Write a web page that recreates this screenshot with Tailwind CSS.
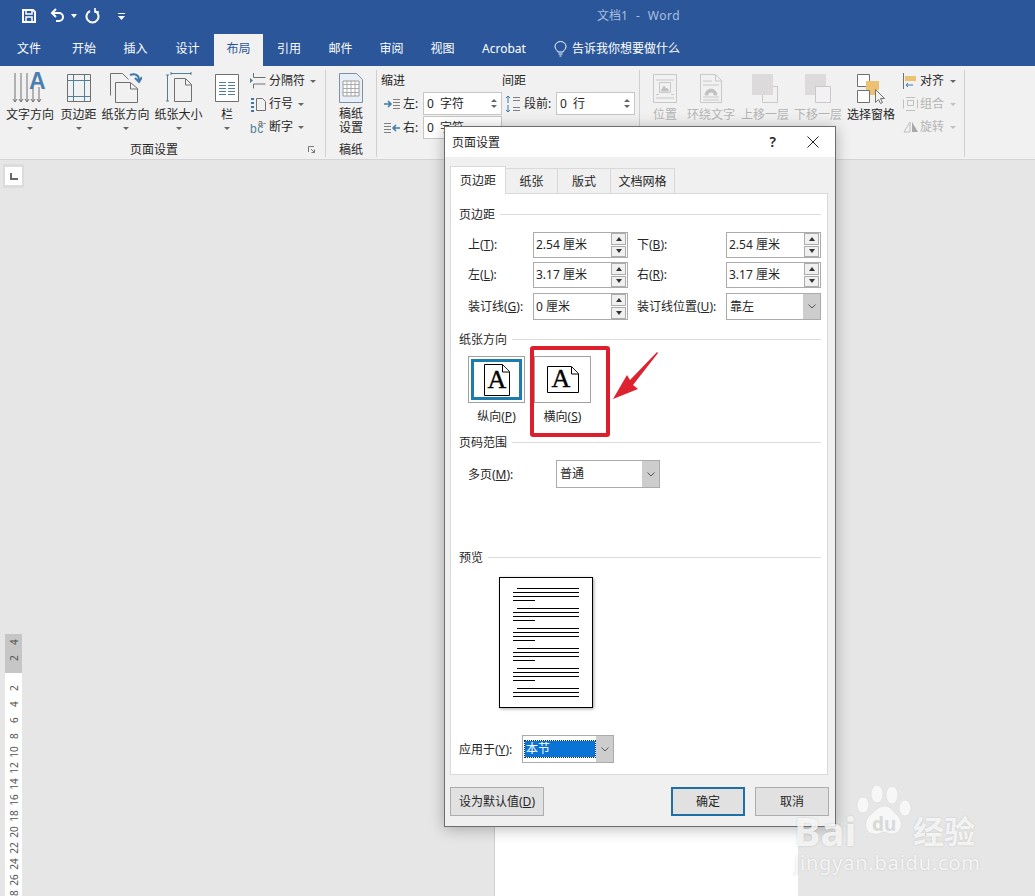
<!DOCTYPE html>
<html lang="zh-CN">
<head>
    <meta charset="UTF-8">
    <title>文档1 - Word</title>
    <script src="https://cdn.jsdelivr.net/npm/@tailwindcss/browser@4"></script>
</head>
<body class="relative w-[1035px] h-[896px] overflow-hidden bg-[#e6e6e6] text-[12px] leading-[16px] text-[#262626] font-['Noto_Sans','Noto_Sans_CJK_SC',sans-serif]">

    <!-- title bar -->
    <div class="bg-[#2b579a] h-[34px] pb-[2px] flex items-center text-white">
        <svg class="ml-[21px]" width="16" height="16" viewBox="0 0 16 16" fill="none" stroke="#fff" stroke-width="2"><path d="M2 2h10l2 2v10H2z"/><path d="M5 2v4h6V2M5 14V9h6v5" stroke-width="1.5"/></svg>
        <svg class="ml-[13px]" width="16" height="16" viewBox="0 0 16 16" fill="none" stroke="#fff" stroke-width="2"><path d="M6 1L2 5l4 4"/><path d="M2 5h7a4 4 0 0 1 4 4v0a4 4 0 0 1-4 4H6"/></svg>
        <svg class="ml-[5px]" width="6" height="4" viewBox="0 0 6 4" fill="#fff"><path d="M0 0h6L3 4z"/></svg>
        <svg class="ml-[7px]" width="16" height="16" viewBox="0 0 16 16" fill="none" stroke="#fff" stroke-width="2"><path d="M6 3a6 6 0 1 0 5 0"/><path d="M11 0v4h4" stroke-width="1.6"/></svg>
        <svg class="ml-[18px]" width="7" height="7" viewBox="0 0 7 7" fill="#fff"><path d="M0 0h7v1H0zM0 3h7L3.5 7z"/></svg>
        <span class="ml-[472px] text-[#a9bfdf]">文档1</span>
        <span class="ml-[8px] text-[#a9bfdf]">-</span>
        <span class="ml-[8px] text-[#a9bfdf] tracking-[0.5px]">Word</span>
    </div>

    <!-- ribbon tabs -->
    <div class="bg-[#2b579a] h-[32px] flex items-stretch text-white">
        <div class="w-[58px] pb-[2px] flex items-center justify-center">文件</div>
        <div class="w-[52px] pb-[2px] flex items-center justify-center">开始</div>
        <div class="w-[51px] pb-[2px] flex items-center justify-center">插入</div>
        <div class="w-[53px] pb-[2px] flex items-center justify-center">设计</div>
        <div class="w-[49px] pb-[2px] flex items-center justify-center bg-[#f1f1f1] text-[#2b579a]">布局</div>
        <div class="w-[52px] pb-[2px] flex items-center justify-center">引用</div>
        <div class="w-[51px] pb-[2px] flex items-center justify-center">邮件</div>
        <div class="w-[51px] pb-[2px] flex items-center justify-center">审阅</div>
        <div class="w-[51px] pb-[2px] flex items-center justify-center">视图</div>
        <div class="w-[72px] pb-[2px] flex items-center justify-center">Acrobat</div>
        <div class="ml-[14px] pb-[2px] flex items-center gap-[5px]">
            <svg width="13" height="16" viewBox="0 0 13 16" fill="none" stroke="#fff"><path d="M4 11C3 9 1 8 1 5.500a5.500 5 0 0 1 11 0C12 8 10 9 9 11zM4.500 13h4M5.500 15h2"/></svg>
            <span>告诉我你想要做什么</span>
        </div>
    </div>

    <!-- ribbon -->
    <div class="bg-[#f1f1f1] h-[94px] pt-[4px] pb-[2px] flex border-b border-[#d4d4d4]">

        <!-- 页面设置 -->
        <div class="w-[326px] h-[87px] border-r border-[#d0d0d0] flex flex-col">
            <div class="flex pl-[3px] pt-[2px]">
                <div class="w-[54px] flex flex-col items-center">
                    <svg class="overflow-visible" width="34" height="32" viewBox="0 0 34 32" fill="none" stroke="#707070"><path d="M2 1v29M8 1v29M14 1v29M20 15v15M26 15v15M0 27l2 3 2-3M6 27l2 3 2-3M12 27l2 3 2-3M18 27l2 3 2-3M24 27l2 3 2-3"/><text x="16" y="17" font-size="23" font-weight="bold" fill="#4a7eb0" stroke="none" font-family="Liberation Sans">A</text></svg>
                    <span class="mt-[2px] h-[18px] leading-[18px] whitespace-nowrap">文字方向</span>
                    <span class="w-0 h-0 mt-[3px] border-x-[3px] border-t-[3px] border-x-transparent border-t-[#666]"></span>
                </div>
                <div class="w-[43px] flex flex-col items-center">
                    <svg width="24" height="32" viewBox="0 0 24 32" fill="none" stroke="#707070"><path d="M.5 2.500h23v27H.5z"/><path d="M6.500 3v26M17.500 3v26M1 8.500h22M1 24.500h22" stroke="#4f7f99"/></svg>
                    <span class="mt-[2px] h-[18px] leading-[18px] whitespace-nowrap">页边距</span>
                    <span class="w-0 h-0 mt-[3px] border-x-[3px] border-t-[3px] border-x-transparent border-t-[#666]"></span>
                </div>
                <div class="w-[51px] flex flex-col items-center">
                    <svg width="32" height="32" viewBox="0 0 32 32" fill="none" stroke="#707070"><path d="M.5 23.500V1.500h12l6 6"/><path d="M5.500 30.500v-20h15l7 6v14z" fill="#f1f1f1"/><path d="M20.500 11v6h7"/><path d="M20 3c5-2 9 0 9 5M25 6l4 4 3-5" stroke="#3e78a8" stroke-width="2"/></svg>
                    <span class="mt-[2px] h-[18px] leading-[18px] whitespace-nowrap">纸张方向</span>
                    <span class="w-0 h-0 mt-[3px] border-x-[3px] border-t-[3px] border-x-transparent border-t-[#666]"></span>
                </div>
                <div class="w-[55px] flex flex-col items-center">
                    <svg width="26" height="32" viewBox="0 0 26 32" fill="none" stroke="#707070"><path d="M8.500 6.500h11l6 6v17h-17z"/><path d="M19.500 7v6h6"/><path d="M1.500 3v26M0 3h3M0 29h3M5 1.500h20M5 0v3M25 0v3" stroke="#4f7f99"/></svg>
                    <span class="mt-[2px] h-[18px] leading-[18px] whitespace-nowrap">纸张大小</span>
                    <span class="w-0 h-0 mt-[3px] border-x-[3px] border-t-[3px] border-x-transparent border-t-[#666]"></span>
                </div>
                <div class="w-[42px] flex flex-col items-center">
                    <svg width="24" height="32" viewBox="0 0 24 32" fill="#fff" stroke="#707070"><path d="M.5 2.500h23v27H.5z"/><path d="M4 10.500h7M13 10.500h7M4 13.500h7M13 13.500h7M4 16.500h7M13 16.500h7M4 19.500h7M13 19.500h7M4 22.500h7M13 22.500h7" stroke="#4f7f99"/></svg>
                    <span class="mt-[2px] h-[18px] leading-[18px] whitespace-nowrap">栏</span>
                    <span class="w-0 h-0 mt-[3px] border-x-[3px] border-t-[3px] border-x-transparent border-t-[#666]"></span>
                </div>
                <div class="ml-[2px] -mt-[1px] flex flex-col gap-[3px]">
                    <div class="h-[20px] flex items-center gap-[3px]">
                        <svg width="16" height="16" viewBox="0 0 16 16" fill="none" stroke="#707070"><path d="M3.500 0v4.500h12M3.500 15.500V11h12"/><path d="M0 5l3 2.500L0 10z" fill="#4f7f99" stroke="none"/></svg>
                        <span>分隔符</span>
                        <span class="w-0 h-0 ml-[2px] border-x-[3px] border-t-[3px] border-x-transparent border-t-[#666]"></span>
                    </div>
                    <div class="h-[20px] flex items-center gap-[3px]">
                        <svg width="16" height="15" viewBox="0 0 16 15" fill="none" stroke="#707070"><path d="M6.500 1.500h6l3 3v9h-9z"/><path d="M1 2h3M1 6h3M1 10h3M1 14h3" stroke="#3e78a8" stroke-width="2"/></svg>
                        <span>行号</span>
                        <span class="w-0 h-0 ml-[2px] border-x-[3px] border-t-[3px] border-x-transparent border-t-[#666]"></span>
                    </div>
                    <div class="h-[20px] flex items-center gap-[3px]">
                        <svg width="16" height="16" viewBox="0 0 16 16" font-family="Liberation Sans"><text x="0" y="14" font-size="12" fill="#4f7f99" letter-spacing="0.5">bc</text><text x="8" y="7" font-size="9" fill="#555">a-</text></svg>
                        <span>断字</span>
                        <span class="w-0 h-0 ml-[2px] border-x-[3px] border-t-[3px] border-x-transparent border-t-[#666]"></span>
                    </div>
                </div>
            </div>
            <div class="mt-auto h-[16px] flex items-center">
                <span class="relative top-px w-[308px] text-center">页面设置</span>
                <svg width="7" height="7" viewBox="0 0 7 7" fill="none" stroke="#777"><path d="M.5 6V.5H6M3 3l3.500 3.500M6.500 3.500v3h-3"/></svg>
            </div>
        </div>

        <!-- 稿纸 -->
        <div class="w-[51px] h-[87px] border-r border-[#d0d0d0] flex flex-col items-center">
            <svg class="mt-[3px]" width="24" height="30" viewBox="0 0 24 30" fill="#fff" stroke="#7f8fa5"><path d="M.5.500h17l6 6v23H.5z" fill="#e8eef7"/><path d="M4 8h16v15H4z" fill="#fff" stroke="#9a9a9a"/><path d="M4 11.500h16M4 15.500h16M4 19.500h16M8 8v15M12 8v15M16 8v15" stroke="#aaa"/></svg>
            <span class="mt-[4px] h-[14px] leading-[14px]">稿纸</span>
            <span class="h-[14px] leading-[14px]">设置</span>
            <span class="relative top-px mt-auto h-[16px]">稿纸</span>
        </div>

        <!-- 段落 -->
        <div class="w-[263px] h-[87px] border-r border-[#d0d0d0] pl-[4px]">
            <div class="h-[18px] pt-[3px] flex">
                <span class="w-[121px]">缩进</span>
                <span>间距</span>
            </div>
            <div class="mt-[4px] flex items-center h-[23px]">
                <svg class="ml-[3px]" width="16" height="12" viewBox="0 0 16 12" fill="none" stroke="#808080"><path d="M9 1.500h7M9 4.500h7M9 7.500h7M9 10.500h7"/><path d="M0 6h6M4 3l3 3-3 3" stroke="#3e78a8" stroke-width="1.500"/></svg>
                <span class="ml-[3px] w-[20px]">左:</span>
                <div class="w-[79px] h-[23px] bg-white border border-[#c6c6c6] flex items-center justify-between pl-[3px] pr-[4px]">
                    <span class="whitespace-pre">0  字符</span>
                    <span class="flex flex-col gap-[3px]"><span class="w-0 h-0 block border-x-[3px] border-b-[3px] border-x-transparent border-b-[#666]"></span><span class="w-0 h-0 block border-x-[3px] border-t-[3px] border-x-transparent border-t-[#666]"></span></span>
                </div>
                <svg class="ml-[3px]" width="15" height="18" viewBox="0 0 15 18" fill="none" stroke="#808080"><path d="M8 2.500h7M8 5.500h7M8 12.500h7M8 15.500h7"/><path d="M3 8V1M1 3l2-2 2 2M3 10v7M1 15l2 2 2-2" stroke="#3e78a8"/></svg>
                <span class="ml-[4px] w-[32px]">段前:</span>
                <div class="w-[79px] h-[23px] bg-white border border-[#c6c6c6] flex items-center justify-between pl-[3px] pr-[4px]">
                    <span class="whitespace-pre">0  行</span>
                    <span class="flex flex-col gap-[3px]"><span class="w-0 h-0 block border-x-[3px] border-b-[3px] border-x-transparent border-b-[#666]"></span><span class="w-0 h-0 block border-x-[3px] border-t-[3px] border-x-transparent border-t-[#666]"></span></span>
                </div>
            </div>
            <div class="mt-px flex items-center h-[23px]">
                <svg class="ml-[3px]" width="16" height="12" viewBox="0 0 16 12" fill="none" stroke="#808080"><path d="M0 1.500h7M0 4.500h7M0 7.500h7M0 10.500h7"/><path d="M16 6h-6M12 3L9 6l3 3" stroke="#3e78a8" stroke-width="1.500"/></svg>
                <span class="ml-[3px] w-[20px]">右:</span>
                <div class="w-[79px] h-[23px] bg-white border border-[#c6c6c6] flex items-center justify-between pl-[3px] pr-[4px]">
                    <span class="whitespace-pre">0  字符</span>
                </div>
            </div>
        </div>

        <!-- 排列 -->
        <div class="w-[325px] h-[87px] border-r border-[#d0d0d0] flex pl-[2px] pt-[2px] text-[#b4b4b4]">
            <div class="w-[46px] flex flex-col items-center">
                <svg width="24" height="32" viewBox="0 0 24 32" fill="none" stroke="#c8c8c8"><path d="M.5 2.500h23v28H.5z"/><path d="M3 8h18M3 26h18M3 22.500h3M18 22.500h3M6.500 10.500h11v10h-11z"/><path d="M8 19l3-5 2 3 1-1 2 3z" fill="#c0c0c0"/></svg>
                <span class="mt-[2px] h-[18px] leading-[18px]">位置</span>
            </div>
            <div class="w-[46px] flex flex-col items-center">
                <svg width="22" height="32" viewBox="0 0 22 32" fill="none" stroke="#c8c8c8"><path d="M.5 2.500h15l6 6v22H.5z"/><path d="M15.500 3v6h6M3 9h9M3 13h16M3 25h16M3 28h16"/><path d="M5 23a6 6 0 0 1 12 0h-3a3 3 0 0 0-6 0z" fill="#c0c0c0"/></svg>
                <span class="mt-[2px] h-[18px] leading-[18px] whitespace-nowrap">环绕文字</span>
            </div>
            <div class="ml-[4px] w-[54px] flex flex-col items-center">
                <svg width="26" height="32" viewBox="0 0 26 32" fill="none" stroke="#c8c8c8"><path d="M10.500 14.500h15v16h-15z"/><path d="M0 2h21v21H0z" fill="#dcdadb" stroke="none"/></svg>
                <span class="mt-[2px] h-[18px] leading-[18px] whitespace-nowrap">上移一层</span>
            </div>
            <div class="w-[52px] flex flex-col items-center">
                <svg width="26" height="32" viewBox="0 0 26 32" fill="none" stroke="#c8c8c8"><path d="M0 2h21v21H0z" fill="#dcdadb" stroke="none"/><path d="M10.500 14.500h15v16h-15z" fill="#f3f1f3"/></svg>
                <span class="mt-[2px] h-[18px] leading-[18px] whitespace-nowrap">下移一层</span>
            </div>
            <div class="w-[54px] flex flex-col items-center text-[#262626]">
                <svg width="28" height="32" viewBox="0 0 28 32" fill="none" stroke="#707070"><path d="M.5 2.500h12v12H.5zM.5 18.500h12v12H.5z" fill="#fff"/><path d="M9 9h13v9h-4v5h-5v-5H9z" fill="#ecc272" stroke="none"/><path d="M18.500 17.500v13l3-3 2 4 2-1-2-4h4z" fill="#f1f1f1"/></svg>
                <span class="mt-[2px] h-[18px] leading-[18px] whitespace-nowrap">选择窗格</span>
            </div>
            <div class="ml-[5px] -mt-[1px] flex flex-col gap-[3px]">
                <div class="h-[20px] flex items-center gap-[4px] text-[#262626]">
                    <svg width="13" height="16" viewBox="0 0 13 16" fill="none" stroke="#707070"><path d="M.5 0v16"/><path d="M2 3h11v5H2z" fill="#ecc272" stroke="none"/><path d="M10 12H3M5 10l-2 2 2 2" stroke="#3e78a8"/></svg>
                    <span>对齐</span>
                    <span class="w-0 h-0 ml-[2px] border-x-[3px] border-t-[3px] border-x-transparent border-t-[#666]"></span>
                </div>
                <div class="h-[20px] flex items-center gap-[4px]">
                    <svg width="15" height="14" viewBox="0 0 15 14" fill="none" stroke="#c0c0c0"><path d="M.5 2.500v9M14.500 2.500v9M3 .5h9M3 13.500h9M4.500 3.500h6v5h-6z"/></svg>
                    <span class="-ml-[2px]">组合</span>
                    <span class="w-0 h-0 ml-[2px] border-x-[3px] border-t-[3px] border-x-transparent border-t-[#c0c0c0]"></span>
                </div>
                <div class="h-[20px] flex items-center gap-[4px]">
                    <svg width="16" height="12" viewBox="0 0 16 12" fill="none" stroke="#c0c0c0"><path d="M7 1L1 11h6z"/><path d="M9 1l6 10H9z" fill="#a8a8a8" stroke="none"/></svg>
                    <span class="-ml-[3px]">旋转</span>
                    <span class="w-0 h-0 ml-[2px] border-x-[3px] border-t-[3px] border-x-transparent border-t-[#c0c0c0]"></span>
                </div>
            </div>
        </div>
    </div>

    <!-- document area -->
    <div class="flex h-[736px]">
        <div class="w-[24px] ml-[3px] flex flex-col">
            <div class="mt-[4px] w-[21px] h-[24px] shrink-0 bg-[#dcdcdc] flex items-center justify-center">
                <div class="w-[17px] h-[18px] bg-white flex items-center justify-center">
                    <span class="block w-[8px] h-[7px] border-l-2 border-b-2 border-[#6a6a6a]"></span>
                </div>
            </div>
            <div class="ml-[2px] mt-[446px] w-[17px] flex-1 min-h-0 flex flex-col text-[#555] text-[10px] leading-[16px]">
                <div class="h-[39px] bg-[#c6c6c6] shrink-0">
                    <div class="h-[16px] -rotate-90 text-center">4</div>
                    <div class="h-[16px] -rotate-90 text-center">2</div>
                </div>
                <div class="flex-1 min-h-0 bg-white pt-[7px]">
                    <div class="h-[16px] -rotate-90 text-center">2</div>
                    <div class="h-[16px] -rotate-90 text-center">4</div>
                    <div class="h-[16px] -rotate-90 text-center">6</div>
                    <div class="h-[16px] -rotate-90 text-center">8</div>
                    <div class="h-[16px] -rotate-90 text-center">10</div>
                    <div class="h-[16px] -rotate-90 text-center">12</div>
                    <div class="h-[16px] -rotate-90 text-center">14</div>
                    <div class="h-[16px] -rotate-90 text-center">16</div>
                    <div class="h-[16px] -rotate-90 text-center">18</div>
                    <div class="h-[16px] -rotate-90 text-center">20</div>
                    <div class="h-[16px] -rotate-90 text-center">22</div>
                    <div class="h-[16px] -rotate-90 text-center">24</div>
                    <div class="h-[16px] -rotate-90 text-center">26</div>
                    <div class="h-[16px] -rotate-90 text-center">28</div>
                </div>
            </div>
        </div>
        <div class="ml-[467px] mt-[513px] w-[304px] h-[223px] bg-white border-l border-[#cfcfcf]"></div>
    </div>

    <!-- 页面设置 dialog -->
    <div class="absolute left-[444px] top-[126px] w-[392px] h-[701px] border border-[#6d6d6d] bg-[#f0f0f0] flex flex-col shadow-[0_2px_14px_rgba(0,0,0,0.28)]">
        <div class="h-[30px] bg-white flex items-center pl-[7px] pr-[16px] shrink-0">
            <span class="relative top-px text-[#1f1f1f]">页面设置</span>
            <span class="ml-auto text-[14px] font-semibold">?</span>
            <svg class="ml-[31px]" width="12" height="12" viewBox="0 0 12 12" stroke="#222"><path d="M.5.500l11 11M11.500.500l-11 11"/></svg>
        </div>

        <div class="mt-[9px] ml-[5px] h-[28px] flex items-end relative z-10 shrink-0">
            <div class="w-[56px] h-[28px] pt-px bg-white border border-b-0 border-[#d9d9d9] flex items-center justify-center">页边距</div>
            <div class="w-[52px] h-[26px] pt-px border-t border-r border-b border-[#d9d9d9] flex items-center justify-center">纸张</div>
            <div class="w-[53px] h-[26px] pt-px border-t border-r border-b border-[#d9d9d9] flex items-center justify-center">版式</div>
            <div class="w-[64px] h-[26px] pt-px border-t border-r border-b border-[#d9d9d9] flex items-center justify-center">文档网格</div>
        </div>

        <div class="ml-[5px] -mt-px w-[378px] h-[582px] bg-white border border-[#d9d9d9] pl-[8px] pr-[6px] shrink-0">
            <div class="mt-[12px] h-[16px] flex items-center gap-[5px]">
                <span class="relative top-px">页边距</span>
                <span class="flex-1 h-px bg-[#dcdcdc]"></span>
            </div>

            <div class="mt-[10px] ml-[9px] flex items-center h-[26px]">
                <span class="w-[65px]">上(<u>T</u>):</span>
                <div class="w-[95px] h-[26px] bg-white border border-[#ababab] flex items-center justify-between pl-[2px] pr-px">
                    <span>2.54 厘米</span>
                    <span class="w-[15px] h-[24px] flex flex-col gap-px"><span class="flex-1 bg-[#f0f0f0] border border-[#acacac] flex items-center justify-center"><span class="w-0 h-0 border-x-[3px] border-b-[4px] border-x-transparent border-b-[#333]"></span></span><span class="flex-1 bg-[#f0f0f0] border border-[#acacac] flex items-center justify-center"><span class="w-0 h-0 border-x-[3px] border-t-[4px] border-x-transparent border-t-[#333]"></span></span></span>
                </div>
                <span class="ml-[9px] w-[89px]">下(<u>B</u>):</span>
                <div class="w-[95px] h-[26px] bg-white border border-[#ababab] flex items-center justify-between pl-[2px] pr-px">
                    <span>2.54 厘米</span>
                    <span class="w-[15px] h-[24px] flex flex-col gap-px"><span class="flex-1 bg-[#f0f0f0] border border-[#acacac] flex items-center justify-center"><span class="w-0 h-0 border-x-[3px] border-b-[4px] border-x-transparent border-b-[#333]"></span></span><span class="flex-1 bg-[#f0f0f0] border border-[#acacac] flex items-center justify-center"><span class="w-0 h-0 border-x-[3px] border-t-[4px] border-x-transparent border-t-[#333]"></span></span></span>
                </div>
            </div>
            <div class="mt-[4px] ml-[9px] flex items-center h-[26px]">
                <span class="w-[65px]">左(<u>L</u>):</span>
                <div class="w-[95px] h-[26px] bg-white border border-[#ababab] flex items-center justify-between pl-[2px] pr-px">
                    <span>3.17 厘米</span>
                    <span class="w-[15px] h-[24px] flex flex-col gap-px"><span class="flex-1 bg-[#f0f0f0] border border-[#acacac] flex items-center justify-center"><span class="w-0 h-0 border-x-[3px] border-b-[4px] border-x-transparent border-b-[#333]"></span></span><span class="flex-1 bg-[#f0f0f0] border border-[#acacac] flex items-center justify-center"><span class="w-0 h-0 border-x-[3px] border-t-[4px] border-x-transparent border-t-[#333]"></span></span></span>
                </div>
                <span class="ml-[9px] w-[89px]">右(<u>R</u>):</span>
                <div class="w-[95px] h-[26px] bg-white border border-[#ababab] flex items-center justify-between pl-[2px] pr-px">
                    <span>3.17 厘米</span>
                    <span class="w-[15px] h-[24px] flex flex-col gap-px"><span class="flex-1 bg-[#f0f0f0] border border-[#acacac] flex items-center justify-center"><span class="w-0 h-0 border-x-[3px] border-b-[4px] border-x-transparent border-b-[#333]"></span></span><span class="flex-1 bg-[#f0f0f0] border border-[#acacac] flex items-center justify-center"><span class="w-0 h-0 border-x-[3px] border-t-[4px] border-x-transparent border-t-[#333]"></span></span></span>
                </div>
            </div>
            <div class="mt-[5px] ml-[9px] flex items-center h-[27px]">
                <span class="w-[65px]">装订线(<u>G</u>):</span>
                <div class="w-[95px] h-[27px] bg-white border border-[#ababab] flex items-center justify-between pl-[2px] pr-px">
                    <span>0 厘米</span>
                    <span class="w-[15px] h-[25px] flex flex-col gap-px"><span class="flex-1 bg-[#f0f0f0] border border-[#acacac] flex items-center justify-center"><span class="w-0 h-0 border-x-[3px] border-b-[4px] border-x-transparent border-b-[#333]"></span></span><span class="flex-1 bg-[#f0f0f0] border border-[#acacac] flex items-center justify-center"><span class="w-0 h-0 border-x-[3px] border-t-[4px] border-x-transparent border-t-[#333]"></span></span></span>
                </div>
                <span class="ml-[9px] w-[89px] whitespace-nowrap">装订线位置(<u>U</u>):</span>
                <div class="w-[95px] h-[27px] bg-white border border-[#ababab] flex items-center justify-between pl-[3px]">
                    <span>靠左</span>
                    <span class="w-[17px] h-[25px] bg-[#cdcdcd] flex items-center justify-center"><svg width="8" height="5" viewBox="0 0 8 5" fill="none" stroke="#555"><path d="M.5.500L4 4 7.500.500"/></svg></span>
                </div>
            </div>

            <div class="mt-[11px] h-[16px] flex items-center gap-[5px]">
                <span class="relative top-px">纸张方向</span>
                <span class="flex-1 h-px bg-[#dcdcdc]"></span>
            </div>
            <div class="mt-[9px] ml-[9px] flex gap-[9px]">
                <div class="w-[57px]">
                    <div class="h-[47px] border border-[#a0a0a0] p-[2px]">
                        <div class="h-full border-[3px] border-[#1c7cab] flex items-center justify-center">
                            <svg class="overflow-visible" width="26" height="32" viewBox="0 0 26 32" fill="#fff" stroke="#000"><path d="M.5.500h18l7 7v24H.5z" fill="#fff"/><path d="M18.500 1v7h7"/><text x="13" y="24" text-anchor="middle" font-size="26" fill="#000" stroke="#000" stroke-width="0.4" font-family="Liberation Serif">A</text></svg>
                        </div>
                    </div>
                    <div class="mt-[6px] text-center whitespace-nowrap">纵向(<u>P</u>)</div>
                </div>
                <div class="w-[57px]">
                    <div class="h-[47px] border border-[#a0a0a0] flex items-center justify-center">
                        <svg class="overflow-visible" width="32" height="27" viewBox="0 0 32 27" fill="#fff" stroke="#000"><path d="M.5.500h24l7 7v19H.5z" fill="#fff"/><path d="M24.500 1v7h7"/><text x="14" y="21" text-anchor="middle" font-size="26" fill="#000" stroke="#000" stroke-width="0.4" font-family="Liberation Serif">A</text></svg>
                    </div>
                    <div class="mt-[6px] text-center whitespace-nowrap">横向(<u>S</u>)</div>
                </div>
            </div>

            <div class="mt-[9px] h-[16px] flex items-center gap-[5px]">
                <span class="relative top-px">页码范围</span>
                <span class="flex-1 h-px bg-[#dcdcdc]"></span>
            </div>
            <div class="mt-[10px] ml-[9px] flex items-center h-[28px]">
                <span class="relative top-px w-[88px]">多页(<u>M</u>):</span>
                <div class="w-[104px] h-[28px] bg-white border border-[#ababab] flex items-center justify-between pl-[3px]">
                    <span>普通</span>
                    <span class="w-[17px] h-[26px] bg-[#cdcdcd] flex items-center justify-center"><svg width="8" height="5" viewBox="0 0 8 5" fill="none" stroke="#555"><path d="M.5.500L4 4 7.500.500"/></svg></span>
                </div>
            </div>

            <div class="mt-[61px] h-[16px] flex items-center gap-[5px]">
                <span class="relative top-px">预览</span>
                <span class="flex-1 h-px bg-[#dcdcdc]"></span>
            </div>
            <div class="mt-[12px] ml-[40px] w-[94px] h-[131px] border border-black bg-white shadow-[1px_1px_3px_rgba(0,0,0,0.35)] pt-[10px] pl-[13px] flex flex-col gap-[7px]">
                <div class="flex flex-col gap-[3px]"><span class="h-px w-[62px] ml-[4px] bg-black"></span><span class="h-px w-[66px] bg-black"></span><span class="h-px w-[66px] bg-black"></span><span class="h-px w-[22px] bg-black"></span></div>
                <div class="flex flex-col gap-[3px]"><span class="h-px w-[62px] ml-[4px] bg-black"></span><span class="h-px w-[66px] bg-black"></span><span class="h-px w-[66px] bg-black"></span><span class="h-px w-[22px] bg-black"></span></div>
                <div class="flex flex-col gap-[3px]"><span class="h-px w-[62px] ml-[4px] bg-black"></span><span class="h-px w-[66px] bg-black"></span><span class="h-px w-[66px] bg-black"></span><span class="h-px w-[22px] bg-black"></span></div>
                <div class="flex flex-col gap-[3px]"><span class="h-px w-[62px] ml-[4px] bg-black"></span><span class="h-px w-[66px] bg-black"></span><span class="h-px w-[66px] bg-black"></span><span class="h-px w-[22px] bg-black"></span></div>
                <div class="flex flex-col gap-[3px]"><span class="h-px w-[62px] ml-[4px] bg-black"></span><span class="h-px w-[66px] bg-black"></span><span class="h-px w-[66px] bg-black"></span><span class="h-px w-[22px] bg-black"></span></div>
                <div class="flex flex-col gap-[3px]"><span class="h-px w-[62px] ml-[4px] bg-black"></span><span class="h-px w-[66px] bg-black"></span><span class="h-px w-[66px] bg-black"></span></div>
            </div>
            <div class="mt-[27px] flex items-center h-[28px]">
                <span class="relative top-px w-[63px] whitespace-nowrap">应用于(<u>Y</u>):</span>
                <div class="w-[92px] h-[28px] bg-white border border-[#ababab] flex items-center justify-between pl-[2px]">
                    <span class="w-[70px] h-[16px] bg-[#0a74d6] text-white outline outline-1 outline-dotted outline-[#10356a] pl-[1px]">本节</span>
                    <span class="w-[17px] h-[26px] bg-[#cdcdcd] flex items-center justify-center"><svg width="8" height="5" viewBox="0 0 8 5" fill="none" stroke="#555"><path d="M.5.500L4 4 7.500.500"/></svg></span>
                </div>
            </div>
        </div>

        <div class="mt-[12px] pl-[5px] pr-[6px] flex h-[29px]">
            <div class="w-[94px] pt-px bg-[#e1e1e1] border border-[#adadad] flex items-center justify-center whitespace-nowrap">设为默认值(<u>D</u>)</div>
            <div class="ml-auto w-[74px] pt-px bg-[#e1e1e1] border-2 border-[#1f6fa3] flex items-center justify-center">确定</div>
            <div class="ml-[10px] w-[74px] pt-px bg-[#e1e1e1] border border-[#adadad] flex items-center justify-center">取消</div>
        </div>
    </div>

    <!-- red callout drawn over the dialog -->
    <div class="absolute left-[530px] top-[346px] w-[80px] h-[91px] border-[4px] border-[#dd1f2d] rounded-[3px]"></div>
    <svg class="absolute left-[610px] top-[350px]" width="50" height="52" viewBox="0 0 50 52"><path d="M47 2L20 30 17 25 3 49 28 39 23 35 48 3z" fill="#dd2330"/></svg>

    <!-- watermark -->
    <svg class="absolute left-[855px] top-[784px]" width="60" height="54" viewBox="0 0 60 54" fill="#f7f7f7" stroke="#d9d9d9" stroke-width="0.6"><ellipse cx="8" cy="21" rx="6" ry="8"/><ellipse cx="22" cy="10" rx="6" ry="9"/><ellipse cx="37" cy="11" rx="6" ry="9"/><ellipse cx="50" cy="24" rx="6" ry="8"/><path d="M30 22c6 0 8 6 13 10 5 5 5 17-6 18-4 0-6-2-8-2s-5 3-10 2C9 49 9 38 14 32c5-4 9-10 16-10z"/></svg>
    <span class="absolute left-[872px] top-[812px] text-[19px] leading-[24px] font-bold text-[#d9d9d9]">du</span>
    <span class="absolute left-[794px] top-[814px] text-[40px] leading-[34px] font-bold text-white/80 [text-shadow:0_0_2px_rgba(0,0,0,0.18)]">Bai</span>
    <span class="absolute left-[913px] top-[814px] text-[31px] leading-[34px] font-bold text-white/80 [text-shadow:0_0_2px_rgba(0,0,0,0.18)]">经验</span>
    <span class="absolute left-[794px] top-[851px] text-[20px] leading-[24px] tracking-[0.8px] text-white/80 [text-shadow:0_0_2px_rgba(0,0,0,0.18)]">jingyan.baidu.com</span>

</body>
</html>
